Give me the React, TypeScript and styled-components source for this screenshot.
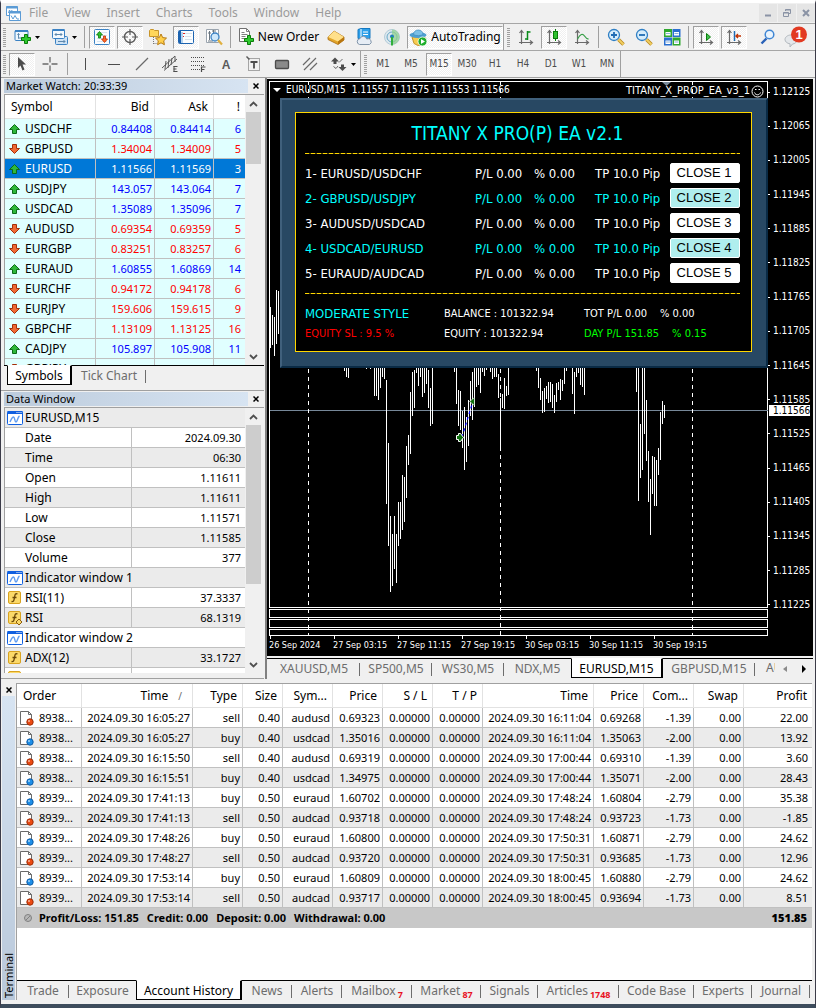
import React from "react";
import styled, { createGlobalStyle, css } from "styled-components";

const UI = `"Noto Sans", "Open Sans", "Liberation Sans", sans-serif`;
const CHART = `"DejaVu Sans Condensed", "Noto Sans", sans-serif`;

const Global = createGlobalStyle`
  *, *::before, *::after { box-sizing: border-box; }
  html, body { margin: 0; padding: 0; background: #f0f0f0; }
  body { font: 12px/16px ${UI}; color: #000; }
  button { font: inherit; color: inherit; background: none; border: 0; padding: 0; margin: 0; border-radius: 0; }
  svg { display: block; flex: none; }
`;

const Shell = styled.div`
  display: flex;
  flex-direction: column;
  min-height: 100vh;
  background: #f0f0f0;
  border-top: 3px solid #fff;
  border-bottom: 4px solid #3d4c5c;
  border-left: 1px solid #3b3b48;
  border-right: 1px solid #3b3b48;
  overflow: hidden;
`;

/* ---------- menu bar ---------- */

const MenuBar = styled.nav`
  display: flex;
  align-items: center;
  gap: 16px;
  height: 20px;
  padding-left: 5px;
  color: #9b9b9b;
`;

const MenuIcon = styled.span`
  margin-right: -8px;
`;

const MenuItem = styled.button`
  font-size: 12px;
  line-height: 20px;
`;

const WindowButtons = styled.div`
  display: flex;
  gap: 1px;
  margin-left: auto;
`;

const WindowButton = styled.button`
  display: grid;
  place-items: center;
  width: 18px;
  height: 18px;
  background: #e5e5e5;
`;

/* ---------- toolbars ---------- */

const Toolbar = styled.div`
  display: flex;
  gap: 1px;
  height: 27px;
  border-top: 1px solid #a6a6a6;
  color: #4c4c4c;
`;

const Band = styled.div<{ $open?: boolean }>`
  display: flex;
  align-items: center;
  gap: 2px;
  border-right: ${(p) => (p.$open ? "0" : "1px solid #a0a0a0")};
`;

const Grip = styled.span`
  width: 3px;
  height: 19px;
  margin: 0 1px 0 2px;
  background: repeating-linear-gradient(#a0a0a0 0 1px, #f0f0f0 1px 2px);
`;

const Sep = styled.span<{ $wide?: boolean }>`
  width: 1px;
  height: 22px;
  margin: ${(p) => (p.$wide ? "0 3px 0 2px" : "0 2px 0 1px")};
  background: #a0a0a0;
`;

const pressed = css`
  background: repeating-conic-gradient(#fff 0 25%, #f0f0f0 0 50%) 0 0 / 2px 2px;
  border-color: #a0a0a0 #fff #fff #a0a0a0;
`;

const Tool = styled.button<{ $on?: boolean; $w?: number }>`
  display: flex;
  align-items: center;
  justify-content: center;
  gap: 3px;
  width: ${(p) => p.$w ?? 26}px;
  height: 23px;
  border: 1px solid transparent;
  white-space: nowrap;
  ${(p) => p.$on && pressed}
`;

const ToolText = styled.span`
  font-size: 12px;
  line-height: 20px;
  color: #000;
`;

const Period = styled(Tool)`
  font: 10px/20px ${CHART};
`;

const EndTools = styled.div`
  display: flex;
  align-items: center;
  gap: 2px;
  margin-left: auto;
  padding-right: 6px;
`;

/* ---------- docked panes ---------- */

const Workspace = styled.div`
  display: flex;
  flex: 1 1 0;
  min-height: 480px;
  border-top: 1px solid #a0a0a0;
`;

const Dock = styled.aside`
  display: flex;
  flex-direction: column;
  flex: none;
  width: 263px;
`;

const Pane = styled.section<{ $basis: number }>`
  display: flex;
  flex-direction: column;
  flex: 1 1 ${(p) => p.$basis}px;
  min-height: 0;
  padding: 1px 0 5px 3px;
  border-bottom: 1px solid #a0a0a0;
`;

const PaneTitle = styled.header`
  display: flex;
  height: 14px;
  margin-bottom: 1px;
`;

const PaneName = styled.h2`
  flex: 1;
  margin: 0;
  padding-left: 2px;
  font-weight: 400;
  font-size: 11px;
  line-height: 14px;
  background: linear-gradient(90deg, #bccbdc, #d7e4f2);
`;

const PaneClose = styled.button`
  display: grid;
  place-items: center;
  width: 16px;
`;

const ListBox = styled.div`
  display: flex;
  flex: 1;
  min-height: 0;
  overflow: hidden;
  border: 1px solid #a0a0a0;
  border-width: 1px 0 0 1px;
  background: #fff;
`;

const ListBody = styled.div`
  flex: 1;
  overflow: hidden;
`;

const Grid = styled.table`
  width: 100%;
  table-layout: fixed;
  border-collapse: separate;
  border-spacing: 0;
`;

const Cell = styled.td<{ $right?: boolean; $pad?: number }>`
  height: 20px;
  padding: 0 ${(p) => p.$pad ?? 2}px 0 ${(p) => (p.$right ? 0 : 20)}px;
  border-right: 1px solid #c0c0c0;
  border-bottom: 1px solid #c0c0c0;
  text-align: ${(p) => (p.$right ? "right" : "left")};
  font-size: ${(p) => (p.$right ? 11 : 12)}px;
  font-weight: 400;
  line-height: 18px;
  white-space: nowrap;
  overflow: hidden;
  &:last-child { border-right: 0; }
`;

const HeadCell = styled.th<{ $left?: boolean }>`
  height: 24px;
  padding: 0 5px 0 6px;
  border-right: 1px solid #e2e2e2;
  border-bottom: 1px solid #e2e2e2;
  background: #fff;
  text-align: ${(p) => (p.$left ? "left" : "right")};
  font-weight: 400;
  font-size: 12px;
  line-height: 20px;
  white-space: nowrap;
  overflow: hidden;
  &:last-child { border-right: 0; }
`;

const SortMark = styled.span`
  padding: 0 5px 0 10px;
  font-size: 10px;
  color: #6d6d6d;
`;

const QuoteRow = styled.tr<{ $up: boolean; $sel?: boolean }>`
  background: ${(p) => (p.$sel ? "#0078d7" : "#e0ffff")};
  color: ${(p) => (p.$sel ? "#fff" : p.$up ? "#0000ff" : "#ff0000")};
`;

const QuoteName = styled.span<{ $sel?: boolean }>`
  display: flex;
  align-items: center;
  gap: 5px;
  margin-left: -16px;
  color: ${(p) => (p.$sel ? "#fff" : "#000")};
`;

const DataRow = styled.tr<{ $alt?: boolean }>`
  background: ${(p) => (p.$alt ? "#ebebeb" : "#fff")};
`;

const DataName = styled.span<{ $icon?: boolean }>`
  display: flex;
  align-items: center;
  gap: 2px;
  margin-left: ${(p) => (p.$icon ? -18 : 0)}px;
`;

const ScrollTrack = styled.div`
  display: flex;
  flex-direction: column;
  flex: none;
  width: 19px;
  padding: 0 3px 0 1px;
  background: #f0f0f0;
`;

const ScrollButton = styled.button`
  display: grid;
  place-items: center;
  height: 17px;
  flex: none;
`;

const ScrollRail = styled.div`
  flex: 1;
`;

const ScrollThumb = styled.div<{ $share: number }>`
  height: ${(p) => p.$share}%;
  background: #cdcdcd;
`;

/* ---------- tab strips ---------- */

const TabStrip = styled.div`
  display: flex;
  flex: none;
  height: 20px;
  border-top: 1px solid #000;
  background: #f0f0f0;
`;

const Tab = styled.button<{ $w: number; $on?: boolean; $bare?: boolean }>`
  position: relative;
  flex: 0 0 ${(p) => p.$w}px;
  height: ${(p) => (p.$on ? 20 : 19)}px;
  font-size: 12px;
  line-height: 18px;
  white-space: nowrap;
  color: #6d6d6d;
  &::after {
    content: "";
    position: absolute;
    right: 0;
    top: 4px;
    height: 13px;
    width: 1px;
    background: ${(p) => (p.$bare || p.$on ? "transparent" : "#6d6d6d")};
  }
  ${(p) =>
    p.$on &&
    css`
      margin-top: -1px;
      padding-top: 1px;
      color: #000;
      background: #fff;
      border: 1px solid #000;
      border-top-color: #fff;
      border-width: 1px 2px 1px 1px;
    `}
`;

const Count = styled.sub`
  margin-left: 2px;
  font-size: 9px;
  line-height: 1px;
  font-weight: 700;
  color: #e81123;
`;

const DockTabs = styled(TabStrip)`
  padding-left: 3px;
`;

/* ---------- chart ---------- */

const ChartSide = styled.main`
  display: flex;
  flex-direction: column;
  flex: 1;
  min-width: 0;
  margin-left: 1px;
  border-left: 2px solid #808080;
  border-right: 2px solid #f0f0f0;
`;

const ChartWindow = styled.div`
  display: flex;
  flex-direction: column;
  flex: 1;
  min-height: 0;
  margin-top: 1px;
  padding: 2px 0 0 2px;
  background: #000;
  color: #fff;
`;

const PlotRow = styled.div`
  display: flex;
  flex: 1;
  min-height: 0;
`;

const Plot = styled.div`
  position: relative;
  display: flex;
  flex-direction: column;
  gap: 1px;
  flex: 1;
  min-width: 0;
  overflow: hidden;
`;

const PriceFrame = styled.div`
  flex: 1;
  border: 1px solid #fff;
`;

const SubFrame = styled.div<{ $h: number }>`
  flex: 0 0 ${(p) => p.$h}px;
  border: 1px solid #fff;
`;

const Bars = styled.svg`
  position: absolute;
  left: 0;
  top: 0;
`;

const PriceLine = styled.div`
  position: absolute;
  left: 1px;
  right: 0;
  top: 329px;
  height: 1px;
  background: #778899;
`;

const ChartCaption = styled.div`
  position: absolute;
  left: 4px;
  top: 2px;
  display: flex;
  align-items: center;
  gap: 3px;
  font: 10px/14px ${CHART};
  white-space: nowrap;
`;

const CaptionSymbol = styled.span`
  margin: 0 3px 0 2px;
`;

const ExpertCaption = styled(ChartCaption)`
  left: auto;
  right: 4px;
  top: 3px;
  gap: 1px;
  font-size: 11px;
`;

const PriceAxis = styled.ol`
  position: relative;
  display: flex;
  flex-direction: column;
  justify-content: space-between;
  flex: none;
  width: 45px;
  margin: 0;
  padding: 5px 0 25px;
  list-style: none;
  font: 10px/12px ${CHART};
`;

const PriceTick = styled.li`
  display: flex;
  align-items: center;
  gap: 3px;
  &::before {
    content: "";
    width: 2px;
    height: 1px;
    background: #fff;
  }
`;

const PriceNow = styled.li`
  position: absolute;
  left: 1px;
  right: 3px;
  top: 324px;
  padding-left: 4px;
  line-height: 11px;
  background: #fff;
  color: #000;
`;

const TimeAxis = styled.ol`
  display: flex;
  flex: none;
  height: 20px;
  margin: 0;
  padding: 0;
  list-style: none;
  overflow: hidden;
  font: 9px/14px ${CHART};
`;

const TimeTick = styled.li`
  position: relative;
  flex: 0 0 64px;
  padding-top: 2px;
  white-space: nowrap;
  &::before {
    content: "";
    position: absolute;
    left: 1px;
    top: 0;
    width: 1px;
    height: 3px;
    background: #fff;
  }
`;

const ChartTabs = styled(TabStrip)`
  height: 21px;
  margin-top: 2px;
  padding-left: 1px;
`;

const ClippedTab = styled.span`
  flex: 1;
  min-width: 0;
  max-width: 22px;
  padding-left: 11px;
  overflow: hidden;
  line-height: 18px;
  color: #6d6d6d;
`;

const TabArrows = styled.div`
  display: flex;
  flex: none;
  margin-left: auto;
`;

const TabArrow = styled.button`
  display: grid;
  place-items: center;
  width: 19px;
`;

/* ---------- expert panel ---------- */

const Expert = styled.section`
  position: absolute;
  left: 11px;
  right: 0;
  top: 17px;
  padding: 12px 14px 14px 13px;
  background: #284863;
  border: 2px solid;
  border-color: #40607c #0a2a44 #0a2a44 #40607c;
  font-family: ${CHART};
`;

const ExpertBody = styled.div`
  padding: 0 11px 7px 9px;
  border: 1px solid #ffd700;
  background: #000;
`;

const ExpertTitle = styled.h1`
  margin: 0;
  padding-right: 10px;
  font-weight: 400;
  font-size: 19px;
  line-height: 40px;
  text-align: center;
  color: #00ffff;
`;

const Rule = styled.hr`
  height: 1px;
  margin: 0;
  border: 0;
  background: repeating-linear-gradient(90deg, #ffd700 0 4px, #5a4c00 4px 6px);
`;

const PairList = styled.div`
  padding: 7px 0;
`;

const Pair = styled.div<{ $alt: boolean }>`
  display: grid;
  grid-template-columns: minmax(0, 1fr) 59px 61px 75px 70px;
  align-items: center;
  height: 25px;
  font-size: 13px;
  white-space: nowrap;
  color: ${(p) => (p.$alt ? "#00ffff" : "#fff")};
`;

const CloseButton = styled.button<{ $alt: boolean }>`
  height: 20px;
  margin-bottom: 2px;
  padding-right: 2px;
  border: 1px solid #fff;
  border-radius: 2px;
  background: ${(p) => (p.$alt ? "#afeeee" : "#fff")};
  font: 13px/18px "Liberation Sans", Arial, sans-serif;
  color: #000;
`;

const Stats = styled.div`
  display: grid;
  grid-template-columns: 139px 140px minmax(0, 1fr);
  grid-auto-rows: 20px;
  align-items: center;
  padding-top: 10px;
  white-space: nowrap;
`;

const Stat = styled.span<{ $color?: string; $big?: boolean }>`
  display: flex;
  gap: 13px;
  font-size: ${(p) => (p.$big ? 13 : 11)}px;
  color: ${(p) => p.$color ?? "#fff"};
`;

/* ---------- terminal ---------- */

const TerminalPane = styled.section`
  display: flex;
  flex: none;
  padding: 3px 3px 4px 1px;
  border-top: 1px solid #f0f0f0;
`;

const TerminalSide = styled.header`
  display: flex;
  flex-direction: column;
  flex: none;
  width: 13px;
  margin-right: 1px;
`;

const TerminalClose = styled.button`
  display: grid;
  place-items: center;
  height: 13px;
`;

const TerminalName = styled.h2`
  flex: 1;
  margin: 0;
  padding-top: 2px;
  writing-mode: vertical-rl;
  transform: rotate(180deg);
  font-weight: 400;
  font-size: 11px;
  line-height: 13px;
  background: linear-gradient(0deg, #d7e4f2, #b9c8da);
`;

const TerminalBody = styled.div`
  flex: 1;
  min-width: 0;
  border-top: 1px solid #a0a0a0;
  border-left: 1px solid #a0a0a0;
  background: #fff;
  overflow: hidden;
`;

const Order = styled.span`
  display: flex;
  align-items: center;
  gap: 4px;
  margin-left: -18px;
  font-size: 11px;
`;

const Summary = styled.div`
  display: flex;
  align-items: center;
  gap: 6px;
  height: 20px;
  padding: 0 5px 0 6px;
  margin-bottom: 52px;
  background: #c8c8c8;
  font-size: 11px;
  line-height: 18px;
  font-weight: 700;
`;

const SummaryItem = styled.span`
  margin-right: 2px;
`;

const SummaryTotal = styled.strong`
  margin-left: auto;
`;

/* ---------- icons ---------- */

const Svg = ({ s = 18, children }: { s?: number; children: React.ReactNode }) => (
  <svg width={s} height={s} viewBox={`0 0 ${s} ${s}`} aria-hidden="true">
    {children}
  </svg>
);

const Drop = () => (
  <svg width="5" height="3" viewBox="0 0 5 3" aria-hidden="true">
    <path d="M0 0h5L2.500 3z" fill="#000" />
  </svg>
);

const Cross = () => (
  <svg width="6" height="6" viewBox="0 0 6 6" aria-hidden="true">
    <path d="M.5.5l5 5M5.500.5l-5 5" stroke="#000" strokeWidth="1.500" />
  </svg>
);

const LogoIcon = () => (
  <Svg s={15}>
    <path d="M.5.5h11v9H.5z" fill="#fff" stroke="#5b9bd5" />
    <path d="M.5 1.500h11" stroke="#5b9bd5" strokeWidth="2" />
    <path d="M2.500 7l1-3 1.500 3 1-3" fill="none" stroke="#5b9bd5" />
    <path d="M3.500 5.500h11v9h-11z" fill="#fff" stroke="#5b9bd5" />
    <path d="M3.500 6.500h11" stroke="#5b9bd5" strokeWidth="2" />
    <path d="M5 9.500l2 3.500 2-3.500 2 3.500h2" fill="none" stroke="#5b9bd5" />
  </Svg>
);

const Plus = ({ x, y }: { x: number; y: number }) => (
  <path d={`M${x + 3.5} ${y + 0.5}h3v3h3v3h-3v3h-3v-3h-3v-3h3z`} fill="#2fc92f" stroke="#0a7d0a" />
);

const NewChartIcon = () => (
  <Svg>
    <rect x="1" y="2.500" width="13" height="10" rx="1" fill="#eef6fd" stroke="#3b82c4" />
    <path d="M1 3h13" stroke="#3b82c4" strokeWidth="2" />
    <path d="M4.500 5.500v5M3.500 7l1-1.500 1 1.500M4 10h5" fill="none" stroke="#5d88ad" />
    <Plus x={7} y={6} />
  </Svg>
);

const ProfilesIcon = () => (
  <Svg>
    <rect x="4.500" y="8.500" width="12" height="8" rx="1" fill="#cfe3f5" stroke="#3b82c4" />
    <rect x="1.500" y="1.500" width="12" height="9" rx="1" fill="#f4f9fe" stroke="#3b82c4" />
    <path d="M1.500 2h12" stroke="#3b82c4" strokeWidth="2" />
    <path d="M4 6.500h7M4 6.500l1.500-1.500M4 6.500l1.500 1.500M11 6.500l-1.500-1.500M11 6.500l-1.500 1.500M7 13.500h7M12.500 12l1.500 1.500-1.500 1.500" fill="none" stroke="#5d88ad" />
  </Svg>
);

const MarketIcon = () => (
  <Svg>
    <rect x="1.500" y="1.500" width="15" height="15" rx="1" fill="#f8fcff" stroke="#3b82c4" />
    <path d="M4 4.500h10M4 7.500h10M4 10.500h10M4 13.500h10" stroke="#d5e3ef" />
    <path d="M6.500 3.500l3 3.500h-2v3h-2V7h-2z" fill="#2fc02f" stroke="#0a7d0a" strokeWidth=".8" />
    <path d="M11.500 14.500l3-3.500h-2V8h-2v3h-2z" fill="#ff6a2a" stroke="#c03000" strokeWidth=".8" />
  </Svg>
);

const TargetIcon = () => (
  <Svg>
    <circle cx="9" cy="9" r="5.500" fill="none" stroke="#5a5a5a" strokeWidth="1.400" />
    <path d="M9 1v6M9 11v6M1 9h6M11 9h6" stroke="#5a5a5a" strokeWidth="1.200" />
  </Svg>
);

const starPath = "M12 6l1.700 3.600 3.800.5-2.800 2.700.7 3.900L12 14.800l-3.400 1.900.7-3.900-2.800-2.700 3.800-.5z";

const NavigatorIcon = () => (
  <Svg>
    <path d="M.5 2.500l1-1h3l1 1h4v6h-9z" fill="#ffd65a" stroke="#c8952a" />
    <path d="M4.500 9v7M4.500 15.500h3" stroke="#777" strokeDasharray="1 1" />
    <path d={starPath} fill="#ffcf4a" stroke="#b67a12" />
  </Svg>
);

const TerminalIcon = () => (
  <Svg>
    <rect x="1.500" y="2.500" width="15" height="13" rx="1" fill="#fafdff" stroke="#1c63b0" />
    <path d="M3 3v12" stroke="#1c63b0" strokeWidth="2" />
    <path d="M5 4v11" stroke="#9cc4ea" strokeWidth="1.500" />
    <path d="M8 5.500h7M8 8.500h6M8 11.500h7" stroke="#d7dfe8" />
    <path d="M6 5.500h2M6 8.500h1" stroke="#e02020" />
  </Svg>
);

const TesterIcon = () => (
  <Svg>
    <path d="M1.500 1.500h12v13h-12z" fill="#fff" stroke="#9aa4ae" />
    <path d="M4.500 3v9M3 5h3M8.500 2v4M7 3h4M3 13h5" stroke="#6b7680" />
    <circle cx="10" cy="9" r="4" fill="#cfe8fb" stroke="#3b82c4" strokeWidth="1.300" />
    <path d="M13 12l4 4.500" stroke="#e0b040" strokeWidth="2.200" />
  </Svg>
);

const NewOrderIcon = () => (
  <Svg>
    <path d="M2.500.5h7l3 3v10h-10z" fill="#fff" stroke="#707070" />
    <path d="M9.500.5v3h3M4.500 4.500h3M4.500 6.500h6M4.500 8.500h4M4.500 10.500h3" fill="none" stroke="#808080" />
    <Plus x={7} y={7} />
  </Svg>
);

const IngotIcon = () => (
  <Svg>
    <path d="M1 9l6-6 10 6v3l-6 4.500L1 11.500z" fill="#e2a52a" stroke="#a86a0c" strokeWidth=".8" />
    <path d="M1 9l6-6 10 6-6 4.500z" fill="#ffe08a" />
    <path d="M11 13.500v3l6-4.500V9z" fill="#b8760f" />
  </Svg>
);

const VpsIcon = () => (
  <Svg>
    <path d="M3 1.500l3-1h9v10H3z" fill="#2ea0ea" stroke="#1678c0" />
    <path d="M6 1v9" stroke="#fff" />
    <path d="M8 4h5M8 6.500h5" stroke="#fff" />
    <path d="M4.500 16.500a3 3 0 01.5-5.900 3.500 3.500 0 016.700.4 2.800 2.800 0 012.800 5.500z" fill="#e6edf5" stroke="#7f93a8" />
  </Svg>
);

const SignalIcon = () => (
  <Svg>
    <circle cx="9" cy="9" r="7.500" fill="#dde8ee" stroke="#b3ccd9" />
    <circle cx="9" cy="9" r="5" fill="none" stroke="#6aa9c8" />
    <path d="M9 1.500a7.500 7.500 0 010 15z" fill="#8fd08a" opacity=".7" />
    <circle cx="9" cy="8.500" r="2" fill="#1f7fb8" />
    <path d="M9 9v8.500" stroke="#2fae3a" strokeWidth="2" />
  </Svg>
);

const AutoIcon = () => (
  <Svg s={19}>
    <path d="M3 9l13 0-2 7.500-5 1-4-2z" fill="#f7cc50" stroke="#c4932a" />
    <ellipse cx="9" cy="7" rx="8.500" ry="3" fill="#4f9fd0" />
    <path d="M4.500 6.500c0-6 9.500-6 9.500 0-2 1.500-7 1.500-9.500 0z" fill="#7cc0e6" stroke="#3f8cbd" strokeWidth=".7" />
    <circle cx="13.500" cy="13.500" r="4.500" fill="#1fae2c" stroke="#fff" strokeWidth=".8" />
    <path d="M12 11l4 2.500-4 2.500z" fill="#fff" />
  </Svg>
);

const Axes = () => (
  <path d="M4.500 3v13M2.500 5l2-2.500 2 2.500M2 14.500h13M13 12.500l2.500 2-2.500 2" fill="none" stroke="#6a6a6a" strokeWidth="1.200" />
);

const BarChartIcon = () => (
  <Svg>
    <Axes />
    <path d="M10.500 3v9M10.500 4h3M8 11h2.500" stroke="#0a8a1a" strokeWidth="1.500" />
  </Svg>
);
const CandleIcon = () => (
  <Svg>
    <Axes />
    <path d="M10.500 1v12" stroke="#0a7d0a" />
    <rect x="8.500" y="3.500" width="4" height="7" fill="#2fc02f" stroke="#0a7d0a" />
  </Svg>
);
const LineChartIcon = () => (
  <Svg>
    <Axes />
    <path d="M4.500 11c3-5 5-6 7-3s2.500 3 4 3" fill="none" stroke="#3aa04a" strokeWidth="1.300" />
  </Svg>
);

const Lens = ({ plus }: { plus?: boolean }) => (
  <Svg>
    <path d="M11.500 11.500l5 5" stroke="#b98a20" strokeWidth="3.600" />
    <path d="M11.500 11.500l5 5" stroke="#f2cf62" strokeWidth="1.800" />
    <circle cx="7" cy="7" r="5.500" fill="#d6edfb" stroke="#2f7fc4" strokeWidth="1.300" />
    <path d={plus ? "M4 7h6M7 4v6" : "M4 7h6"} stroke="#1f6cb4" strokeWidth="1.800" />
  </Svg>
);

const TileIcon = () => (
  <Svg>
    <path d="M1 1h8v8H1zM9.500 9.500h8v8h-8z" fill="#2fa82f" />
    <path d="M9.500 1h8v8h-8zM1 9.500h8v8H1z" fill="#2a6fd0" />
    <path d="M2.500 4h5v3.500h-5zM11 4h5v3.500h-5zM2.500 12.500h5V16h-5zM11 12.500h5V16h-5z" fill="#fff" />
    <path d="M3 5.500h4M11.500 5.500h4M3 14h4M11.500 14h4" stroke="#8ab0d8" />
  </Svg>
);

const ScrollEndIcon = () => (
  <Svg>
    <Axes />
    <path d="M9.500 5.500l4 3.500-4 3.500z" fill="#3fc04f" stroke="#0a7d0a" />
  </Svg>
);
const ShiftIcon = () => (
  <Svg>
    <Axes />
    <path d="M9.500 3v10" stroke="#1f6cb4" strokeWidth="1.500" />
    <path d="M16 8h-5M13 6l-2 2 2 2" fill="none" stroke="#c03000" strokeWidth="1.400" />
  </Svg>
);

const SearchIcon = () => (
  <Svg>
    <path d="M7.500 10.500l-5 5" stroke="#2a62b8" strokeWidth="2.400" />
    <circle cx="10.500" cy="6.500" r="4.300" fill="#eaf4fd" stroke="#3f86d4" strokeWidth="1.500" />
  </Svg>
);

const ChatIcon = () => (
  <svg width="24" height="22" viewBox="0 0 24 22" aria-hidden="true">
    <path d="M7 9c4 0 6 2 6 4.500S11 18 8.500 18L6 21v-3.200C3 17.500 1 15.500 1 13.500S3 9 7 9z" fill="#e4e7ea" stroke="#b2b8be" />
    <circle cx="15" cy="8.500" r="8" fill="#e23a22" />
    <text x="15" y="13" textAnchor="middle" fontFamily="Liberation Sans, Arial, sans-serif" fontSize="13" fontWeight="700" fill="#fff">1</text>
  </svg>
);

const CursorIcon = () => (
  <Svg>
    <path d="M5 2l8 7.500H9.500l2 5-2 1-2-5L5 13z" fill="#4c4c4c" />
  </Svg>
);
const CrosshairIcon = () => (
  <Svg>
    <path d="M9 2v5.500M9 10.500V16M1.500 9h6M10.500 9h6" stroke="#6a6a6a" strokeWidth="1.300" />
  </Svg>
);
const VLineIcon = () => (
  <Svg>
    <path d="M8.500 3v12" stroke="#4c4c4c" />
  </Svg>
);
const HLineIcon = () => (
  <Svg>
    <path d="M3 9.500h12" stroke="#4c4c4c" />
  </Svg>
);
const TrendIcon = () => (
  <Svg>
    <path d="M3 15L15 3" stroke="#6a6a6a" strokeWidth="1.200" />
  </Svg>
);
const ChannelIcon = () => (
  <Svg>
    <path d="M1 13L14 1M3 15.500L16 4M5 6l-1 8M8 4L7 13M11 3l-1 7M14 1v6" stroke="#5a5a5a" />
    <path d="M12.500 11.500h4M12.500 14h3M12.500 16.500h4M13 11v6" stroke="#4c4c4c" />
  </Svg>
);
const FiboIcon = () => (
  <Svg>
    <path d="M2 2.500h14M2 6.500h14M2 10.500h14M2 14.500h9" stroke="#4c4c4c" strokeDasharray="1 1" />
    <path d="M12.500 17v-5h4M12.500 14.500h3" fill="none" stroke="#4c4c4c" strokeWidth="1.200" />
  </Svg>
);
const TextIcon = () => (
  <Svg>
    <text x="9" y="14" textAnchor="middle" fontFamily="Liberation Sans, Arial, sans-serif" fontSize="12" fontWeight="700" fill="#5a5a5a">A</text>
  </Svg>
);
const LabelIcon = () => (
  <Svg>
    <rect x="3.500" y="3.500" width="11" height="12" fill="none" stroke="#5a5a5a" strokeDasharray="1 1" />
    <path d="M1.500 1.500l3 3" stroke="#5a5a5a" strokeWidth="1.500" />
    <path d="M5.500 7h7M9 6.500v7" fill="none" stroke="#4c4c4c" strokeWidth="1.800" />
  </Svg>
);
const RectIcon = () => (
  <Svg>
    <rect x="2.500" y="5.500" width="13" height="8" rx="1" fill="#8a8a8a" stroke="#4c4c4c" strokeWidth="1.300" />
  </Svg>
);
const LinesIcon = () => (
  <Svg>
    <path d="M2 10l7-7M3 15L15 3M9 15l7-7" stroke="#6a6a6a" strokeWidth="1.200" />
  </Svg>
);
const ArrowsIcon = () => (
  <Svg>
    <path d="M5 2.500l4 4H6.500V9h-3V6.500H1z" fill="#4c4c4c" />
    <path d="M12.500 16l4-4H14V9.500h-3V12H8.500z" fill="#4c4c4c" />
    <path d="M3.500 11.500l2.500 2 2-2.500M9 7.500l3.500-3.500" fill="none" stroke="#6a6a6a" />
  </Svg>
);

const QuoteArrow = ({ up }: { up: boolean }) => (
  <svg width="11" height="10" viewBox="0 0 11 10" aria-hidden="true">
    {up ? (
      <path d="M5.500.5l5 5h-3v4h-4v-4h-3z" fill="#2eb83a" stroke="#0c6b18" />
    ) : (
      <path d="M5.500 9.500l5-5h-3v-4h-4v4h-3z" fill="#f06a35" stroke="#a52e08" />
    )}
  </svg>
);

const WindowIcon = () => (
  <Svg s={16}>
    <rect x=".5" y="1.500" width="15" height="13" rx="1" fill="#fff" stroke="#0f5fe0" />
    <path d="M.5 2.500h15" stroke="#0f5fe0" strokeWidth="3" />
    <path d="M9.500 2.500h1M11.500 2.500h1M13.500 2.500h1" stroke="#fff" />
    <path d="M3 12c1-2 2-5 3.500-5s1 5 2.500 5 1.500-5 3.500-6" fill="none" stroke="#5f9cf0" strokeWidth="1.400" />
  </Svg>
);

const FuncIcon = ({ custom }: { custom?: boolean }) => (
  <Svg s={16}>
    <rect x="1.500" y="1.500" width="12" height="12" rx="1.500" fill="#fbd96a" stroke="#d9a320" />
    <path d="M10.500 4c-2.500-1-2.500 1-3 3.500S7 12 4.500 11.500M5.500 7.500h4" fill="none" stroke="#6b4708" strokeWidth="1.300" />
    {custom && <path d="M12 9l3 3-3 3-3-3z" fill="#fbd96a" stroke="#8a5c10" />}
  </Svg>
);

const DocIcon = ({ buy }: { buy: boolean }) => (
  <Svg s={16}>
    <path d="M1.500 1.500h8l3 3v10h-11z" fill="#fff" stroke="#6a6a6a" />
    <path d="M9.500 1.500v3h3" fill="none" stroke="#6a6a6a" />
    <circle cx="11" cy="12" r="3.200" fill={buy ? "#1e8fe8" : "#ec4a12"} stroke={buy ? "#0c5ca8" : "#a02c04"} />
    <circle cx="10" cy="11" r="1" fill="#fff" opacity=".6" />
  </Svg>
);

const Chevron = ({ down }: { down?: boolean }) => (
  <svg width="9" height="6" viewBox="0 0 9 6" aria-hidden="true">
    <path d={down ? "M1 1l3.500 3.500L8 1" : "M1 5l3.500-3.500L8 5"} fill="none" stroke="#505050" strokeWidth="1.800" />
  </svg>
);

/* ---------- data ---------- */

const quotes: [string, string, string, string, boolean][] = [
  ["USDCHF", "0.84408", "0.84414", "6", true],
  ["GBPUSD", "1.34004", "1.34009", "5", false],
  ["EURUSD", "1.11566", "1.11569", "3", true],
  ["USDJPY", "143.057", "143.064", "7", true],
  ["USDCAD", "1.35089", "1.35096", "7", true],
  ["AUDUSD", "0.69354", "0.69359", "5", false],
  ["EURGBP", "0.83251", "0.83257", "6", false],
  ["EURAUD", "1.60855", "1.60869", "14", true],
  ["EURCHF", "0.94172", "0.94178", "6", false],
  ["EURJPY", "159.606", "159.615", "9", false],
  ["GBPCHF", "1.13109", "1.13125", "16", false],
  ["CADJPY", "105.897", "105.908", "11", true],
  ["GBPJPY", "191.707", "191.723", "16", false],
];

const dataRows: { kind: "head" | "row" | "fn" | "fx"; name: string; value?: string }[] = [
  { kind: "head", name: "EURUSD,M15" },
  { kind: "row", name: "Date", value: "2024.09.30" },
  { kind: "row", name: "Time", value: "06:30" },
  { kind: "row", name: "Open", value: "1.11611" },
  { kind: "row", name: "High", value: "1.11611" },
  { kind: "row", name: "Low", value: "1.11571" },
  { kind: "row", name: "Close", value: "1.11585" },
  { kind: "row", name: "Volume", value: "377" },
  { kind: "head", name: "Indicator window 1" },
  { kind: "fn", name: "RSI(11)", value: "37.3337" },
  { kind: "fx", name: "RSI", value: "68.1319" },
  { kind: "head", name: "Indicator window 2" },
  { kind: "fn", name: "ADX(12)", value: "33.1727" },
  { kind: "fn", name: "+DI", value: "9.0138" },
];

const orders: string[][] = [
  ["8938...", "2024.09.30 16:05:27", "sell", "0.40", "audusd", "0.69323", "2024.09.30 16:11:04", "0.69268", "-1.39", "22.00"],
  ["8938...", "2024.09.30 16:05:27", "buy", "0.40", "usdcad", "1.35016", "2024.09.30 16:11:04", "1.35063", "-2.00", "13.92"],
  ["8938...", "2024.09.30 16:15:50", "sell", "0.40", "audusd", "0.69319", "2024.09.30 17:00:44", "0.69310", "-1.39", "3.60"],
  ["8938...", "2024.09.30 16:15:51", "buy", "0.40", "usdcad", "1.34975", "2024.09.30 17:00:44", "1.35071", "-2.00", "28.43"],
  ["8939...", "2024.09.30 17:41:13", "buy", "0.50", "euraud", "1.60702", "2024.09.30 17:48:24", "1.60804", "-2.79", "35.38"],
  ["8939...", "2024.09.30 17:41:13", "sell", "0.50", "audcad", "0.93718", "2024.09.30 17:48:24", "0.93723", "-1.73", "-1.85"],
  ["8939...", "2024.09.30 17:48:26", "buy", "0.50", "euraud", "1.60800", "2024.09.30 17:50:31", "1.60871", "-2.79", "24.62"],
  ["8939...", "2024.09.30 17:48:27", "sell", "0.50", "audcad", "0.93720", "2024.09.30 17:50:31", "0.93685", "-1.73", "12.96"],
  ["8939...", "2024.09.30 17:53:14", "buy", "0.50", "euraud", "1.60809", "2024.09.30 18:00:45", "1.60880", "-2.79", "24.62"],
  ["8939...", "2024.09.30 17:53:14", "sell", "0.50", "audcad", "0.93717", "2024.09.30 18:00:45", "0.93694", "-1.73", "8.51"],
];

const orderHeads = ["Order", "Time", "Type", "Size", "Sym...", "Price", "S / L", "T / P", "Time", "Price", "Com...", "Swap", "Profit"];
const orderWidths = [65, 111, 50, 40, 50, 50, 50, 50, 111, 50, 50, 50];

const summary = ["Profit/Loss: 151.85", "Credit: 0.00", "Deposit: 0.00", "Withdrawal: 0.00"];

const prices = [
  "1.12125", "1.12065", "1.12005", "1.11945", "1.11885", "1.11825", "1.11765", "1.11705",
  "1.11645", "1.11585", "1.11525", "1.11465", "1.11405", "1.11345", "1.11285", "1.11225",
];

const times = ["26 Sep 2024", "27 Sep 03:15", "27 Sep 11:15", "27 Sep 19:15", "30 Sep 03:15", "30 Sep 11:15", "30 Sep 19:15"];

const pairs = ["EURUSD/USDCHF", "GBPUSD/USDJPY", "AUDUSD/USDCAD", "USDCAD/EURUSD", "EURAUD/AUDCAD"];

// Each bar is x, high, low.
const bars: [number, number, number][] = [
  [270, 307, 348], [272, 315, 345], [274, 317, 356], [276, 290, 344], [278, 291, 334],
  [344, 360, 371], [346, 360, 377], [348, 360, 378], [366, 360, 369], [370, 360, 369],
  [374, 360, 396], [376, 360, 396], [378, 360, 400], [380, 360, 388], [382, 360, 377], [384, 360, 379],
  [386, 380, 504], [388, 443, 546], [390, 516, 592], [392, 534, 586], [394, 516, 569], [396, 534, 583],
  [398, 502, 546], [400, 502, 539], [402, 475, 530], [404, 477, 522], [406, 446, 498], [408, 435, 465],
  [410, 392, 454], [412, 372, 416], [414, 370, 408], [416, 360, 373], [418, 360, 386], [420, 360, 377],
  [422, 360, 397], [424, 360, 393], [426, 360, 384], [428, 370, 408], [430, 388, 426], [432, 360, 424],
  [454, 360, 372], [456, 360, 404], [458, 390, 426], [460, 391, 430], [462, 411, 448], [464, 407, 470],
  [466, 417, 462], [468, 400, 446], [470, 381, 416], [472, 372, 420], [474, 360, 407], [476, 360, 387],
  [478, 360, 385], [480, 360, 393], [482, 360, 372], [484, 360, 376], [486, 360, 370], [490, 360, 372],
  [492, 360, 379], [494, 360, 377], [496, 360, 377], [498, 374, 398], [500, 398, 451], [502, 394, 408],
  [504, 378, 409], [506, 386, 396], [508, 360, 395],
  [536, 360, 371], [538, 360, 388], [540, 378, 400], [542, 391, 413], [544, 388, 412], [546, 386, 399],
  [548, 382, 403], [550, 382, 402], [552, 384, 408], [554, 395, 413], [556, 383, 402], [558, 382, 390],
  [560, 379, 400], [562, 380, 391], [564, 360, 384], [566, 360, 371],
  [572, 360, 394], [574, 372, 414], [576, 360, 377], [578, 360, 373], [580, 360, 385], [582, 360, 387], [584, 360, 395],
  [636, 360, 392], [638, 360, 501], [640, 424, 478], [642, 360, 470], [644, 360, 434], [646, 400, 461],
  [648, 451, 502], [650, 479, 535], [652, 456, 494], [654, 457, 506], [656, 460, 506], [658, 448, 475],
  [660, 412, 460], [662, 401, 424], [664, 405, 418],
];

const barPath = bars.map(([x, hi, lo]) => `M${x + 0.5} ${hi}V${lo}`).join("");

const chartTabs: { name: string; w: number; on?: boolean; bare?: boolean }[] = [
  { name: "XAUUSD,M5", w: 92 },
  { name: "SP500,M5", w: 72 },
  { name: "WS30,M5", w: 72 },
  { name: "NDX,M5", w: 67, bare: true },
  { name: "EURUSD,M15", w: 92, on: true },
  { name: "GBPUSD,M15", w: 92 },
];

const terminalTabs: { name: string; w: number; on?: boolean; count?: string; bare?: boolean }[] = [
  { name: "Trade", w: 52 },
  { name: "Exposure", w: 67, bare: true },
  { name: "Account History", w: 106, on: true },
  { name: "News", w: 50 },
  { name: "Alerts", w: 50 },
  { name: "Mailbox", w: 70, count: "7" },
  { name: "Market", w: 69, count: "87" },
  { name: "Signals", w: 57 },
  { name: "Articles", w: 81, count: "1748" },
  { name: "Code Base", w: 75 },
  { name: "Experts", w: 58 },
  { name: "Journal", w: 58 },
];

/* ---------- parts ---------- */

const Scroll = ({ share }: { share: number }) => (
  <ScrollTrack>
    <ScrollButton aria-label="Scroll up"><Chevron /></ScrollButton>
    <ScrollRail><ScrollThumb $share={share} /></ScrollRail>
    <ScrollButton aria-label="Scroll down"><Chevron down /></ScrollButton>
  </ScrollTrack>
);

const TopMenu = () => (
  <MenuBar>
    <MenuIcon><LogoIcon /></MenuIcon>
    {["File", "View", "Insert", "Charts", "Tools", "Window", "Help"].map((m) => (
      <MenuItem key={m}>{m}</MenuItem>
    ))}
    <WindowButtons>
      <WindowButton aria-label="Minimize">
        <Svg s={10}><path d="M2 7.500h6" stroke="#8a93a5" strokeWidth="2" /></Svg>
      </WindowButton>
      <WindowButton aria-label="Restore">
        <Svg s={10}><path d="M3.500 3V1.500h5v4H7M1.500 4.500h5v4h-5zM1.500 5h5M3.500 2h5" fill="none" stroke="#8a93a5" /></Svg>
      </WindowButton>
      <WindowButton aria-label="Close">
        <Svg s={10}><path d="M2 2l6 6M8 2L2 8" stroke="#8a93a5" strokeWidth="2" /></Svg>
      </WindowButton>
    </WindowButtons>
  </MenuBar>
);

const MainToolbar = () => (
  <Toolbar>
    <Band>
      <Grip />
      <Tool $w={35} aria-label="New chart"><NewChartIcon /><Drop /></Tool>
      <Tool $w={35} aria-label="Profiles"><ProfilesIcon /><Drop /></Tool>
      <Sep />
      <Tool $on aria-label="Market Watch"><MarketIcon /></Tool>
      <Tool $on aria-label="Data Window"><TargetIcon /></Tool>
      <Tool aria-label="Navigator"><NavigatorIcon /></Tool>
      <Tool $on aria-label="Terminal"><TerminalIcon /></Tool>
      <Tool aria-label="Strategy Tester"><TesterIcon /></Tool>
      <Sep />
      <Tool $w={86}><NewOrderIcon /><ToolText>New Order</ToolText></Tool>
      <Tool aria-label="MetaEditor"><IngotIcon /></Tool>
      <Tool aria-label="Virtual hosting"><VpsIcon /></Tool>
      <Tool aria-label="Signals"><SignalIcon /></Tool>
      <Tool $on $w={96}><AutoIcon /><ToolText>AutoTrading</ToolText></Tool>
    </Band>
    <Band $open>
      <Grip />
      <Tool aria-label="Bar chart"><BarChartIcon /></Tool>
      <Tool $on aria-label="Candlesticks"><CandleIcon /></Tool>
      <Tool aria-label="Line chart"><LineChartIcon /></Tool>
      <Sep />
      <Tool aria-label="Zoom in"><Lens plus /></Tool>
      <Tool aria-label="Zoom out"><Lens /></Tool>
      <Tool aria-label="Tile windows"><TileIcon /></Tool>
      <Sep />
      <Tool $on aria-label="Auto scroll"><ScrollEndIcon /></Tool>
      <Tool $on aria-label="Chart shift"><ShiftIcon /></Tool>
    </Band>
    <EndTools>
      <Tool aria-label="Search"><SearchIcon /></Tool>
      <Tool aria-label="Messages"><ChatIcon /></Tool>
    </EndTools>
  </Toolbar>
);

const DrawToolbar = () => (
  <Toolbar>
    <Band>
      <Grip />
      <Tool $on aria-label="Cursor"><CursorIcon /></Tool>
      <Tool aria-label="Crosshair"><CrosshairIcon /></Tool>
      <Sep $wide />
      <Tool aria-label="Vertical line"><VLineIcon /></Tool>
      <Tool aria-label="Horizontal line"><HLineIcon /></Tool>
      <Tool aria-label="Trendline"><TrendIcon /></Tool>
      <Tool aria-label="Equidistant channel"><ChannelIcon /></Tool>
      <Tool aria-label="Fibonacci retracement"><FiboIcon /></Tool>
      <Tool aria-label="Text"><TextIcon /></Tool>
      <Tool aria-label="Text label"><LabelIcon /></Tool>
      <Tool aria-label="Rectangle"><RectIcon /></Tool>
      <Tool aria-label="Lines"><LinesIcon /></Tool>
      <Tool $w={35} aria-label="Arrows"><ArrowsIcon /><Drop /></Tool>
    </Band>
    <Band>
      <Grip />
      {["M1", "M5", "M15", "M30", "H1", "H4", "D1", "W1", "MN"].map((p) => (
        <Period key={p} $on={p === "M15"}>{p}</Period>
      ))}
    </Band>
  </Toolbar>
);

const MarketWatch = () => (
  <Pane $basis={313}>
    <PaneTitle>
      <PaneName>Market Watch: 20:33:39</PaneName>
      <PaneClose aria-label="Close Market Watch"><Cross /></PaneClose>
    </PaneTitle>
    <ListBox>
      <ListBody>
        <Grid>
          <colgroup><col style={{ width: 91 }} /><col style={{ width: 59 }} /><col style={{ width: 59 }} /><col /></colgroup>
          <thead>
            <tr><HeadCell $left>Symbol</HeadCell><HeadCell>Bid</HeadCell><HeadCell>Ask</HeadCell><HeadCell>!</HeadCell></tr>
          </thead>
          <tbody>
            {quotes.map(([name, bid, ask, spread, up]) => {
              const sel = name === "EURUSD";
              return (
                <QuoteRow key={name} $up={up} $sel={sel}>
                  <Cell><QuoteName $sel={sel}><QuoteArrow up={up} />{name}</QuoteName></Cell>
                  <Cell $right>{bid}</Cell>
                  <Cell $right>{ask}</Cell>
                  <Cell $right $pad={4}>{spread}</Cell>
                </QuoteRow>
              );
            })}
          </tbody>
        </Grid>
      </ListBody>
      <Scroll share={22} />
    </ListBox>
    <DockTabs>
      <Tab $w={65} $on>Symbols</Tab>
      <Tab $w={74}>Tick Chart</Tab>
    </DockTabs>
  </Pane>
);

const DataWindow = () => (
  <Pane $basis={288}>
    <PaneTitle>
      <PaneName>Data Window</PaneName>
      <PaneClose aria-label="Close Data Window"><Cross /></PaneClose>
    </PaneTitle>
    <ListBox>
      <ListBody>
        <Grid>
          <colgroup><col style={{ width: 127 }} /><col /></colgroup>
          <tbody>
            {dataRows.map((r, i) => (
              <DataRow key={r.name} $alt={i % 2 === 0}>
                {r.kind === "head" ? (
                  <Cell as="th" colSpan={2}>
                    <DataName $icon><WindowIcon />{r.name}</DataName>
                  </Cell>
                ) : (
                  <>
                    <Cell>
                      <DataName $icon={r.kind !== "row"}>
                        {r.kind !== "row" && <FuncIcon custom={r.kind === "fx"} />}
                        {r.name}
                      </DataName>
                    </Cell>
                    <Cell $right $pad={4}>{r.value}</Cell>
                  </>
                )}
              </DataRow>
            ))}
          </tbody>
        </Grid>
      </ListBody>
      <Scroll share={69} />
    </ListBox>
  </Pane>
);

const ExpertPanel = () => (
  <Expert>
    <ExpertBody>
      <ExpertTitle>TITANY X PRO(P) EA v2.1</ExpertTitle>
      <Rule />
      <PairList>
        {pairs.map((name, i) => (
          <Pair key={name} $alt={i % 2 === 1}>
            <span>{i + 1}- {name}</span>
            <span>P/L 0.00</span>
            <span>% 0.00</span>
            <span>TP 10.0 Pip</span>
            <CloseButton $alt={i % 2 === 1}>CLOSE {i + 1}</CloseButton>
          </Pair>
        ))}
      </PairList>
      <Rule />
      <Stats>
        <Stat $big $color="#00ffff">MODERATE STYLE</Stat>
        <Stat>BALANCE : 101322.94</Stat>
        <Stat><span>TOT P/L 0.00</span><span>% 0.00</span></Stat>
        <Stat $color="#ff0000">EQUITY SL : 9.5 %</Stat>
        <Stat>EQUITY : 101322.94</Stat>
        <Stat $color="#00ff00"><span>DAY P/L 151.85</span><span>% 0.15</span></Stat>
      </Stats>
    </ExpertBody>
  </Expert>
);

const Chart = () => (
  <ChartSide>
    <ChartWindow>
      <PlotRow>
        <Plot>
          <PriceFrame />
          <SubFrame $h={9} />
          <SubFrame $h={9} />
          <SubFrame $h={7} />
          <PriceLine />
          <Bars width="499" height="556" viewBox="269 81 499 556" role="img" aria-label="EURUSD price bars">
            <path d="M308.500 81V637M500.500 81V398M500.500 455V637M692.500 81V637" stroke="#fff" strokeDasharray="4 4" fill="none" />
            <path d={barPath} stroke="#fff" fill="none" />
            <path d="M462 437l11-36" stroke="#0000ff" strokeWidth="1.200" strokeDasharray="3 3" />
            <path d="M456.500 435.500h2v-2h2l3 4-3 4h-2v-2h-2z" fill="#107010" stroke="#fff" />
            <path d="M469.500 401.500l5-4v8z" fill="#107010" stroke="#fff" strokeWidth=".6" />
            <path d="M662 82h9l-4.500 4z" fill="#778899" />
          </Bars>
          <ChartCaption>
            <svg width="8" height="4" viewBox="0 0 8 4" aria-hidden="true"><path d="M0 0h8L4 4z" fill="#fff" /></svg>
            <CaptionSymbol>EURUSD,M15</CaptionSymbol>
            <span>1.11557</span>
            <span>1.11575</span>
            <span>1.11553</span>
            <span>1.11566</span>
          </ChartCaption>
          <ExpertCaption>
            <span>TITANY_X_PROP_EA_v3_1</span>
            <Svg s={13}>
              <circle cx="6.500" cy="6.500" r="5.500" fill="none" stroke="#fff" />
              <path d="M4 4.500h1.500M7.500 4.500H9M3.500 7.500c1 3 5 3 6 0" fill="none" stroke="#fff" />
            </Svg>
          </ExpertCaption>
          <ExpertPanel />
        </Plot>
        <PriceAxis>
          {prices.map((p) => <PriceTick key={p}>{p}</PriceTick>)}
          <PriceNow>1.11566</PriceNow>
        </PriceAxis>
      </PlotRow>
      <TimeAxis>
        {times.map((t) => <TimeTick key={t}>{t}</TimeTick>)}
      </TimeAxis>
    </ChartWindow>
    <ChartTabs>
      {chartTabs.map((t) => (
        <Tab key={t.name} $w={t.w} $on={t.on} $bare={t.bare}>{t.name}</Tab>
      ))}
      <ClippedTab>AUDUSD</ClippedTab>
      <TabArrows>
        <TabArrow aria-label="Previous tabs">
          <svg width="4" height="6" viewBox="0 0 4 6" aria-hidden="true"><path d="M4 0v6L0 3z" fill="#8a8a8a" /></svg>
        </TabArrow>
        <TabArrow aria-label="Next tabs">
          <svg width="4" height="8" viewBox="0 0 4 8" aria-hidden="true"><path d="M0 0v8l4-4z" fill="#000" /></svg>
        </TabArrow>
      </TabArrows>
    </ChartTabs>
  </ChartSide>
);

const Terminal = () => (
  <TerminalPane>
    <TerminalSide>
      <TerminalClose aria-label="Close Terminal"><Cross /></TerminalClose>
      <TerminalName>Terminal</TerminalName>
    </TerminalSide>
    <TerminalBody>
      <Grid>
        <colgroup>
          {orderWidths.map((w, i) => <col key={i} style={{ width: w }} />)}
          <col />
        </colgroup>
        <thead>
          <tr>
            {orderHeads.map((h, i) => (
              <HeadCell key={i} $left={i === 0}>{h}{i === 1 && <SortMark>/</SortMark>}</HeadCell>
            ))}
          </tr>
        </thead>
        <tbody>
          {orders.map((o, i) => (
            <DataRow key={i} $alt={i % 2 === 1}>
              <Cell><Order><DocIcon buy={o[2] === "buy"} />{o[0]}</Order></Cell>
              {[o[1], o[2], o[3], o[4], o[5], "0.00000", "0.00000", o[6], o[7], o[8], "0.00"].map((v, k) => (
                <Cell key={k} $right>{v}</Cell>
              ))}
              <Cell $right $pad={4}>{o[9]}</Cell>
            </DataRow>
          ))}
        </tbody>
      </Grid>
      <Summary>
        <Svg s={10}>
          <circle cx="5" cy="5" r="3.500" fill="#b8b8b8" stroke="#808080" />
          <path d="M3 7l4-4" stroke="#808080" />
        </Svg>
        {summary.map((s) => <SummaryItem key={s}>{s}</SummaryItem>)}
        <SummaryTotal>151.85</SummaryTotal>
      </Summary>
      <TabStrip>
        {terminalTabs.map((t) => (
          <Tab key={t.name} $w={t.w} $on={t.on} $bare={t.bare}>
            {t.name}{t.count && <Count>{t.count}</Count>}
          </Tab>
        ))}
      </TabStrip>
    </TerminalBody>
  </TerminalPane>
);

export default function App() {
  return (
    <>
      <Global />
      <Shell>
        <TopMenu />
        <MainToolbar />
        <DrawToolbar />
        <Workspace>
          <Dock>
            <MarketWatch />
            <DataWindow />
          </Dock>
          <Chart />
        </Workspace>
        <Terminal />
      </Shell>
    </>
  );
}
